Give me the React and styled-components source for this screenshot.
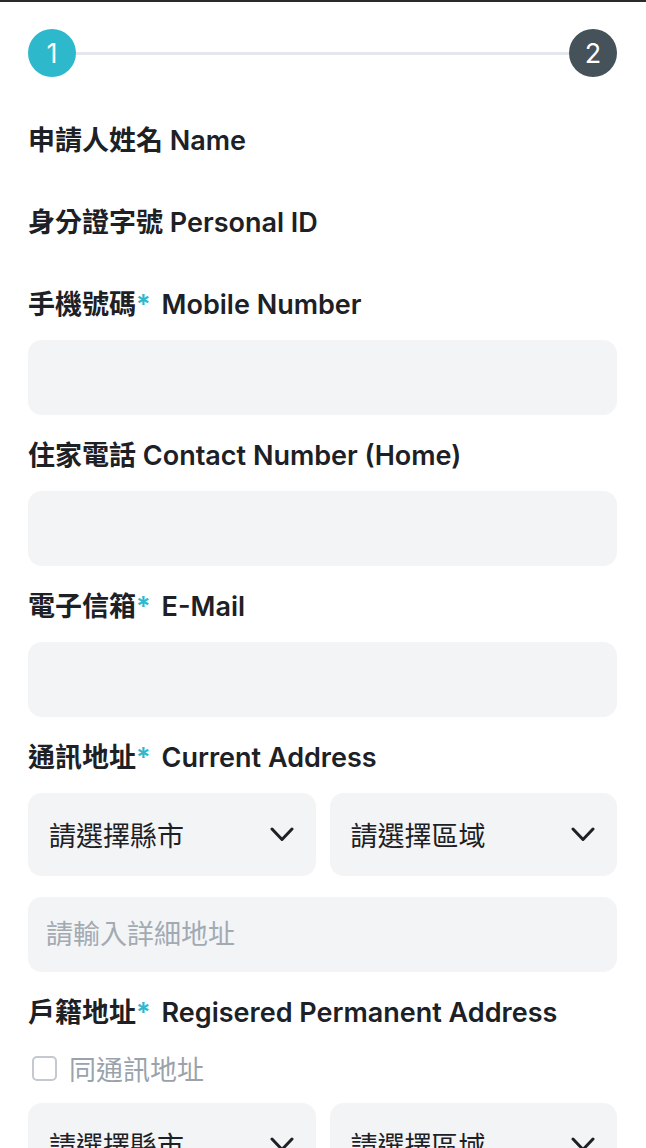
import React from "react";
import styled, { createGlobalStyle } from "styled-components";

const GlobalStyle = createGlobalStyle`
  * { box-sizing: border-box; }
  html, body { margin: 0; padding: 0; background: #ffffff; }
  body {
    font-family: "Inter", "Noto Sans CJK TC", "Noto Sans", sans-serif;
    color: #1d2125;
    -webkit-font-smoothing: antialiased;
  }
`;

const Page = styled.div`
  min-height: 1148px;
  border-top: 2px solid #2a2a2a;
  padding: 27px 29px 40px 28px;
  display: flex;
  flex-direction: column;
`;

const Stepper = styled.div`
  display: flex;
  align-items: center;
  height: 48px;
  margin-bottom: 44px;
`;

const StepDot = styled.div`
  width: 48px;
  height: 48px;
  border-radius: 50%;
  flex: none;
  display: flex;
  align-items: center;
  justify-content: center;
  background: ${(p) => (p.$active ? "#2db8cb" : "#465259")};
  color: #ffffff;
  font-family: "Inter", "Roboto", sans-serif;
  font-size: 27px;
  font-weight: 400;
  line-height: 1;
`;

const StepLine = styled.div`
  flex: 1;
  height: 3px;
  background: #e4e7eb;
`;

const Form = styled.div`
  display: flex;
  flex-direction: column;
  gap: 21px;
`;

const Field = styled.div`
  display: flex;
  flex-direction: column;
  gap: 15px;
`;

const Label = styled.div`
  height: 40px;
  line-height: 40px;
  font-size: 27px;
  font-weight: 600;
  color: #1d2125;
  white-space: nowrap;
`;

const Required = styled.span`
  color: #2db8cb;
  margin-right: 11px;
`;

const ReadonlyValue = styled.div`
  min-height: 6px;
`;

const TextInput = styled.input`
  width: 100%;
  height: 75px;
  border: none;
  outline: none;
  border-radius: 14px;
  background: #f3f4f6;
  padding: 0 18px;
  font-family: "Inter", "Noto Sans CJK TC", sans-serif;
  font-size: 27px;
  color: #1d2125;
  &::placeholder {
    color: #a2aab2;
  }
`;

const SelectRow = styled.div`
  display: grid;
  grid-template-columns: 1fr 1fr;
  gap: 14px;
`;

const SelectBox = styled.div`
  height: 83px;
  border-radius: 14px;
  background: #f3f4f6;
  display: flex;
  align-items: center;
  justify-content: space-between;
  padding: 0 22px 0 21px;
  font-size: 27px;
  color: #1d2125;
  cursor: pointer;
`;

const CheckRow = styled.label`
  height: 40px;
  display: flex;
  align-items: center;
  gap: 12px;
  padding-left: 4px;
  font-size: 27px;
  color: #9aa3ab;
  cursor: pointer;
`;

const CheckBox = styled.span`
  width: 25px;
  height: 25px;
  border: 2px solid #c3c9ce;
  border-radius: 5px;
  flex: none;
`;

const Chevron = () => (
  <svg width="24" height="15" viewBox="0 0 24 15" fill="none">
    <polyline
      points="2,2 12,12.5 22,2"
      stroke="#1d2125"
      strokeWidth="3"
      strokeLinecap="round"
      strokeLinejoin="round"
    />
  </svg>
);

const Select = ({ text }) => (
  <SelectBox>
    <span>{text}</span>
    <Chevron />
  </SelectBox>
);

export default function App() {
  return (
    <>
      <GlobalStyle />
      <Page>
        <Stepper>
          <StepDot $active>1</StepDot>
          <StepLine />
          <StepDot>2</StepDot>
        </Stepper>
        <Form>
          <Field>
            <Label>申請人姓名 Name</Label>
            <ReadonlyValue />
          </Field>
          <Field>
            <Label>身分證字號 Personal ID</Label>
            <ReadonlyValue />
          </Field>
          <Field>
            <Label>
              手機號碼<Required>*</Required>Mobile Number
            </Label>
            <TextInput type="tel" />
          </Field>
          <Field>
            <Label>住家電話 Contact Number (Home)</Label>
            <TextInput type="tel" />
          </Field>
          <Field>
            <Label>
              電子信箱<Required>*</Required>E-Mail
            </Label>
            <TextInput type="email" />
          </Field>
          <Field>
            <Label>
              通訊地址<Required>*</Required>Current Address
            </Label>
            <SelectRow>
              <Select text="請選擇縣市" />
              <Select text="請選擇區域" />
            </SelectRow>
          </Field>
          <TextInput placeholder="請輸入詳細地址" />
          <Field>
            <Label>
              戶籍地址<Required>*</Required>Regisered Permanent Address
            </Label>
            <CheckRow>
              <CheckBox />
              同通訊地址
            </CheckRow>
            <SelectRow>
              <Select text="請選擇縣市" />
              <Select text="請選擇區域" />
            </SelectRow>
          </Field>
          <TextInput placeholder="請輸入詳細地址" />
        </Form>
      </Page>
    </>
  );
}
